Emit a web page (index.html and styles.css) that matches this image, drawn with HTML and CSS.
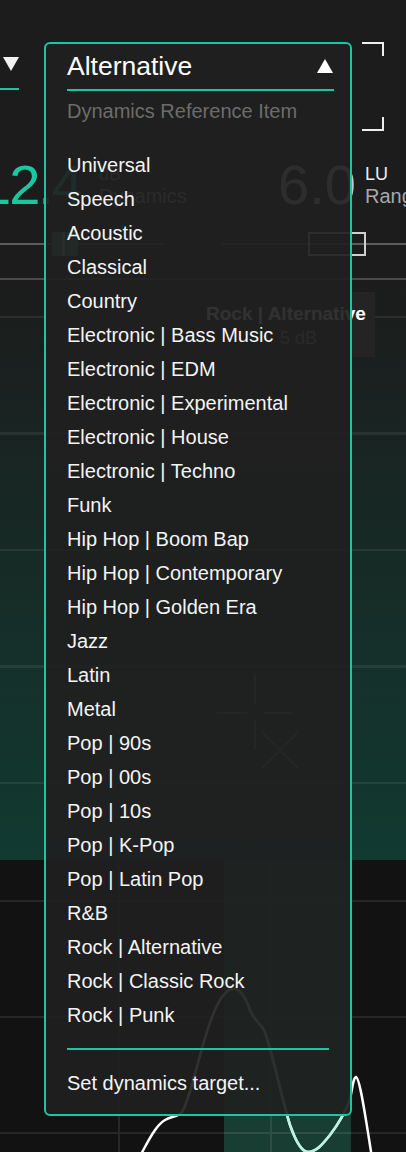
FILE: index.html
```html
<!DOCTYPE html>
<html lang="en">
<head>
<meta charset="utf-8">
<title>Dynamics Reference</title>
<link rel="stylesheet" href="styles.css">
</head>
<body>
<div class="screen">
  <div class="top">
    <div class="row1">
      <div class="leftsel">
        <svg class="tri-down" width="16" height="15" viewBox="0 0 16 15"><polygon points="0,0 16,0 8,14" fill="#f2f2f2"/></svg>
      </div>
      <svg class="corners" width="22" height="89" viewBox="0 0 22 89"><path d="M0 1 H21 V14 M0 88 H21 V75" fill="none" stroke="#eeeeee" stroke-width="2"/></svg>
    </div>
    <div class="row2">
      <div class="bignum num-a">12.4</div>
      <div class="lbls"><span class="unit dim">dB</span><span class="lbl">Dynamics</span></div>
      <div class="bignum num-b">6.0</div>
      <div class="lbls"><span class="unit">LU</span><span class="lbl">Range</span></div>
    </div>
    <div class="slider">
      <div class="knob"></div>
      <div class="range-box"></div>
    </div>
    <div class="sep"></div>
  </div>

  <div class="meter">
    <div class="tip">
      <div class="tip-t">Rock | Alternative</div>
      <div class="tip-v">5 dB</div>
    </div>
    <svg class="cross" width="406" height="580" viewBox="0 0 406 580">
      <g stroke="#666666" stroke-width="2" fill="none">
        <path d="M255 395 V423 M255 440 V470 M217 433 H247 M263 433 H293 M262 452 L298 488 M298 452 L262 488"/>
      </g>
    </svg>
  </div>

  <svg class="graph" width="406" height="292" viewBox="0 0 406 292">
    <defs>
      <clipPath id="target"><rect x="224" y="0" width="127" height="292"/></clipPath>
    </defs>
    <rect x="0" y="0" width="406" height="292" fill="#121212"/>
    <rect x="224" y="0" width="127" height="292" fill="#183e33"/>
    <g stroke="rgba(255,255,255,0.09)" stroke-width="2">
      <path d="M0 41 H406 M0 157 H406 M0 273 H406 M119 0 V292 M271 0 V292"/>
    </g>
    <path d="M140 296 C148 282 155 266 165 260 C172 256 178 257 182 252 C192 238 205 160 222 137 C230 126 240 122 250 150 C254 160 260 163 264 170 C272 190 282 240 290 265 C296 282 302 292 308 292 C316 292 322 285 330 275 C340 262 346 250 350 240 C352 230 353 218 356 217 C360 218 366 260 372 298" fill="none" stroke="#ffffff" stroke-width="2.5"/>
    <path d="M140 296 C148 282 155 266 165 260 C172 256 178 257 182 252 C192 238 205 160 222 137 C230 126 240 122 250 150 C254 160 260 163 264 170 C272 190 282 240 290 265 C296 282 302 292 308 292 C316 292 322 285 330 275 C340 262 346 250 350 240 C352 230 353 218 356 217 C360 218 366 260 372 298" fill="none" stroke="#b9f3df" stroke-width="2.5" clip-path="url(#target)"/>
  </svg>

  <div class="dropdown">
    <div class="dd-head">
      <span class="dd-title">Alternative</span>
      <svg class="tri-up" width="16" height="14" viewBox="0 0 16 14"><polygon points="8,0 16,14 0,14" fill="#ffffff"/></svg>
    </div>
    <div class="dd-sub">Dynamics Reference Item</div>
    <ul class="dd-list">
      <li>Universal</li>
      <li>Speech</li>
      <li>Acoustic</li>
      <li>Classical</li>
      <li>Country</li>
      <li>Electronic | Bass Music</li>
      <li>Electronic | EDM</li>
      <li>Electronic | Experimental</li>
      <li>Electronic | House</li>
      <li>Electronic | Techno</li>
      <li>Funk</li>
      <li>Hip Hop | Boom Bap</li>
      <li>Hip Hop | Contemporary</li>
      <li>Hip Hop | Golden Era</li>
      <li>Jazz</li>
      <li>Latin</li>
      <li>Metal</li>
      <li>Pop | 90s</li>
      <li>Pop | 00s</li>
      <li>Pop | 10s</li>
      <li>Pop | K-Pop</li>
      <li>Pop | Latin Pop</li>
      <li>R&amp;B</li>
      <li>Rock | Alternative</li>
      <li>Rock | Classic Rock</li>
      <li>Rock | Punk</li>
    </ul>
    <div class="dd-div"></div>
    <div class="dd-action">Set dynamics target...</div>
  </div>
</div>
</body>
</html>
```

FILE: styles.css
```css
* {
  box-sizing: border-box;
  margin: 0;
  padding: 0;
}

body {
  margin: 0;
  background: #1c1c1c;
  font-family: "Liberation Sans", Arial, sans-serif;
}

.screen {
  position: relative;
  width: 406px;
  height: 1152px;
  overflow: hidden;
  background: #1c1c1c;
}

/* ---------- top band ---------- */
.top {
  height: 280px;
}

.row1 {
  height: 131px;
  padding-top: 42px;
  display: flex;
  justify-content: space-between;
  align-items: flex-start;
}

.leftsel {
  width: 19px;
  height: 48px;
  padding: 15px 0 0 3px;
  border-bottom: 2px solid #1cc7a0;
}

.tri-down {
  display: block;
}

.corners {
  display: block;
  margin-right: 22px;
}

.row2 {
  height: 82px;
  padding-top: 26px;
  display: flex;
  align-items: flex-start;
}

.bignum {
  flex: none;
  font-size: 56px;
  line-height: 56px;
  white-space: nowrap;
}

.num-a {
  width: 119px;
  margin-left: -20px;
  color: #1cc7a0;
  letter-spacing: -2px;
}

.num-b {
  width: 87px;
  color: #c8c8c8;
}

.lbls {
  flex: none;
  width: 179px;
  padding-top: 6px;
  display: flex;
  flex-direction: column;
}

.lbls:last-child {
  width: auto;
}

.unit {
  font-size: 18px;
  line-height: 22px;
  color: #ececec;
}

.unit.dim {
  color: #a0a0a0;
}

.lbl {
  font-size: 20px;
  line-height: 22px;
  color: #a8a8a8;
  white-space: nowrap;
}

.slider {
  height: 24px;
  margin-top: 19px;
  display: flex;
  align-items: center;
  background:
    linear-gradient(#5c5c5c, #5c5c5c) 0 11px / 165px 2px no-repeat,
    linear-gradient(#5c5c5c, #5c5c5c) 222px 11px / 184px 2px no-repeat;
}

.knob {
  width: 26px;
  height: 24px;
  margin-left: 52px;
  background: linear-gradient(90deg, #3a8a75 0 10px, #6fd0b5 10px 13px, #3a8a75 13px);
}

.range-box {
  width: 58px;
  height: 24px;
  margin-left: 230px;
  border: 2px solid #cfcfcf;
}

.sep {
  height: 2px;
  margin-top: 22px;
  background: #4b4b4b;
}

/* ---------- meter band ---------- */
.meter {
  position: relative;
  height: 580px;
  background:
    repeating-linear-gradient(to bottom,
      transparent 0 36px,
      rgba(255, 255, 255, 0.07) 36px 38px,
      transparent 38px 116.5px),
    linear-gradient(to bottom, #1c1c1c 0%, #113a31 100%);
}

.tip {
  position: absolute;
  left: 200px;
  top: 12px;
  width: 175px;
  height: 65px;
  padding: 11px 0 0 6px;
  background: #242424;
}

.tip-t {
  font-size: 19px;
  line-height: 22px;
  font-weight: bold;
  color: #ffffff;
  white-space: nowrap;
}

.tip-v {
  margin-top: 2px;
  padding-left: 74px;
  font-size: 18px;
  line-height: 22px;
  color: #9a9a9a;
}

.cross {
  position: absolute;
  left: 0;
  top: 0;
}

/* ---------- graph band ---------- */
.graph {
  display: block;
}

/* ---------- dropdown ---------- */
.dropdown {
  position: absolute;
  left: 44px;
  top: 42px;
  width: 308px;
  height: 1074px;
  border: 2px solid #1cc7a0;
  border-radius: 6px;
  background: rgba(31, 31, 31, 0.92);
  color: #f4f4f4;
}

.dd-head {
  margin: 0 16px 0 21px;
  padding-top: 7px;
  padding-bottom: 8px;
  border-bottom: 2px solid #1cc7a0;
  display: flex;
  justify-content: space-between;
  align-items: center;
}

.dd-title {
  font-size: 26.5px;
  line-height: 30px;
  color: #ffffff;
}

.tri-up {
  display: block;
  margin-right: 1px;
}

.dd-sub {
  margin: 8px 0 0 21px;
  font-size: 20px;
  line-height: 24px;
  color: #6c6c6c;
}

.dd-list {
  list-style: none;
  margin-top: 25px;
  padding-left: 21px;
}

.dd-list li {
  font-size: 20px;
  line-height: 34px;
  white-space: nowrap;
}

.dd-div {
  height: 2px;
  margin: 16px 21px 0 21px;
  background: #1cc7a0;
}

.dd-action {
  margin-top: 16px;
  padding-left: 21px;
  font-size: 20px;
  line-height: 34px;
}
```
